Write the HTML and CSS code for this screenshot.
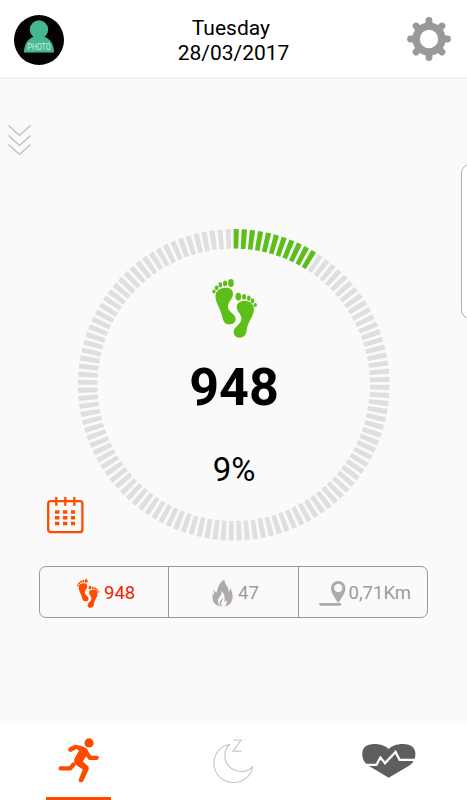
FILE: index.html
```html
<!DOCTYPE html>
<html lang="en">
<head>
    <meta charset="UTF-8">
    <meta name="viewport" content="width=device-width, initial-scale=1.0">
    <title>Activity</title>
    <link rel="stylesheet" href="styles.css">
</head>
<body>
    <svg class="symbols" aria-hidden="true">
        <symbol id="feet" viewBox="35 177 133 175">
            <ellipse cx="91" cy="189" rx="8.5" ry="12"/>
            <ellipse cx="73.500" cy="190" rx="6" ry="8.500"/>
            <ellipse cx="59.500" cy="194" rx="5.500" ry="8"/>
            <ellipse cx="48.500" cy="203" rx="5.500" ry="7"/>
            <ellipse cx="40.500" cy="214" rx="5" ry="6"/>
            <path d="M45 229C44 210 61 203 77 203C90 203 97 210 97 221C97 237 82 245 82 259C82 275 105 280 105 296C105 307 96 312 86 312C74 312 69 304 66 292C61 265 46 251 45 229Z"/>
            <ellipse cx="113" cy="229" rx="8.500" ry="11.500"/>
            <ellipse cx="130" cy="230" rx="6" ry="8.500"/>
            <ellipse cx="144" cy="234" rx="5.500" ry="8"/>
            <ellipse cx="155" cy="242" rx="5.500" ry="7"/>
            <ellipse cx="163" cy="254" rx="5" ry="6"/>
            <path d="M108 260C108 249 117 242 130 242C147 242 160 249 159 268C158 290 141 301 138 327C136 343 130 351 117 351C106 351 99 344 99 335C99 317 122 313 122 294C122 280 108 275 108 260Z"/>
        </symbol>
    </svg>

    <header class="header">
        <svg class="avatar" viewBox="0 0 50 50">
            <circle cx="25" cy="25" r="25" fill="#050203"/>
            <circle cx="25" cy="14.500" r="9.200" fill="#47b78f"/>
            <path d="M10 37.500C10 29 14 23.500 20 21.500H30C36 23.500 40 29 40 37.500Z" fill="#47b78f"/>
            <text class="avatar-text" x="13.500" y="35.300" textLength="23" lengthAdjust="spacingAndGlyphs">PHOTO</text>
        </svg>
        <div class="date">
            <div>Tuesday&nbsp;</div>
            <div>28/03/2017</div>
        </div>
        <svg class="gear" viewBox="-22 -22 44 44">
            <circle r="12.900" fill="none" stroke="#999" stroke-width="7.400"/>
            <path d="M0-14V-18.500M0 14V18.500M-14 0H-18.500M14 0H18.500M-10-10L-13-13M10-10L13-13M-10 10L-13 13M10 10L13 13" stroke="#999" stroke-width="6.800" stroke-linecap="round"/>
        </svg>
    </header>

    <main class="main">
        <svg class="chevrons" viewBox="0 0 24 31">
            <path d="M.5.5L11.500 10.500L22.500.5M.5 10.500L11.500 20.500L22.500 10.500M.5 19.500L11.500 29.500L22.500 19.500"/>
        </svg>
        <div class="drawer"></div>

        <section class="dial">
            <svg class="ring" viewBox="0 0 312 312">
                <g transform="rotate(-90 155.700 155.800)">
                    <circle class="ring-track" cx="155.700" cy="155.800" r="146" pathLength="360"/>
                    <circle class="ring-value" cx="155.700" cy="155.800" r="146" pathLength="360"/>
                </g>
            </svg>
            <div class="dial-content">
                <svg class="dial-icon"><use href="#feet"/></svg>
                <div class="steps">948</div>
                <div class="percent">9%</div>
            </div>
        </section>

        <svg class="calendar" viewBox="0 0 37 37">
            <rect x="1.200" y="4.200" width="34.200" height="31" rx="2.500"/>
            <path d="M9.300 0V8.700M18.300 0V8.700M27.300 0V8.700"/>
            <path class="calendar-days" d="M8 15H28M8 20.800H28M8 26.500H28"/>
        </svg>

        <div class="stats">
            <div class="stat active">
                <svg class="stat-feet"><use href="#feet"/></svg>
                <span>948</span>
            </div>
            <div class="stat">
                <svg class="stat-flame" viewBox="0 0 64 84">
                    <path d="M38 0C36 14 52 23 51 38C55 36 56 31 55 27C66 43 66 67 52 77C46 82 42 82 38 83C45 77 47 70 43 63C41 67 40 68 37 69C41 56 37 43 29 36C31 49 19 54 18 66C17 74 22 80 28 83C12 80 1 71 2 57C2 51 0 49 0 46L5 49C7 44 4 39 5 33C9 36 10 39 12 42C20 34 14 17 38 0Z"/>
                    <path d="M33 56C35 66 27 67 28 74C28 79 31 82 34 83C27 83 22 78 23 72C24 65 31 64 33 56Z"/>
                </svg>
                <span>47</span>
            </div>
            <div class="stat">
                <svg class="stat-pin" viewBox="0 0 81 76">
                    <path fill-rule="evenodd" d="M58 0C70 0 80 10 80 22C80 37 66 54 58 67C50 54 36 37 36 22C36 10 46 0 58 0ZM58 9A12.500 12.500 0 1 0 58 34A12.500 12.500 0 1 0 58 9Z"/>
                    <path d="M4 71H63" stroke="#afa9a9" stroke-width="8" stroke-linecap="round"/>
                </svg>
                <span>0,71Km</span>
            </div>
        </div>
    </main>

    <nav class="tabs">
        <a class="tab active">
            <svg class="runner" viewBox="82 70 124 136">
                <circle cx="176" cy="85" r="14"/>
                <path d="M133 90C145 91 157 94 166 100C175 106 175 114 169 122L157 141L170 152C176 157 176 162 173 169L159 199C155 208 142 204 145 195L157 165L138 152C129 145 129 136 134 128L146 108L137 103L124 111C115 115 108 105 117 99Z"/>
                <path d="M168 115L179 130H199M129 150L119 162H90" fill="none" stroke="#ff4b00" stroke-width="13" stroke-linecap="round" stroke-linejoin="round"/>
            </svg>
        </a>
        <a class="tab">
            <svg class="moon" viewBox="0 0 42 46">
                <path d="M16.500 5.500C7 7 1 15 1 24.500C1 35 9.500 43.500 20 43.500C30 43.500 38.500 37 39.500 28C35 32 30 33.500 24.500 32C15 30 10 21 12.500 12C13.200 9.300 14.500 7.500 16.500 5.500Z"/>
                <path d="M20 1H28L20 12.200H28.500"/>
            </svg>
        </a>
        <a class="tab">
            <svg class="heart" viewBox="36 40 162 106">
                <path d="M116 145L54 108C40 98 36 86 36 73C36 54 49 43 72 43C94 43 107 50 116 58C125 50 138 43 160 43C183 43 197 54 197 73C197 86 193 98 179 108Z" fill="#5e5e5e"/>
                <path d="M34 106H79L91 84L105 101L137 67L149 91H200" fill="none" stroke="#fff" stroke-width="7"/>
            </svg>
        </a>
    </nav>
</body>
</html>
```

FILE: styles.css
```css
* {
    margin: 0;
    padding: 0;
    box-sizing: border-box;
}

body {
    display: flex;
    flex-direction: column;
    width: 467px;
    height: 800px;
    overflow: hidden;
    background: #fafafa;
    color: #000;
    font-family: Roboto, sans-serif;
}

svg {
    display: block;
}

.symbols {
    position: absolute;
    width: 0;
    height: 0;
}

/* Header */
.header {
    display: flex;
    justify-content: space-between;
    align-items: flex-start;
    height: 79px;
    padding: 15px 16px 0 14px;
    background: #fff;
    border-bottom: 2px solid #f0f0f0;
}

.avatar {
    width: 50px;
    height: 50px;
}

.avatar-text {
    font-size: 9px;
    fill: #d5f2e8;
}

.date {
    margin-left: -4px;
    padding-top: 1px;
    text-align: center;
    font-size: 21px;
    line-height: 25px;
}

.gear {
    width: 44px;
    height: 44px;
    margin-top: 2px;
}

/* Main */
.main {
    position: relative;
    flex: 1;
    padding-top: 46px;
}

.chevrons {
    width: 24px;
    height: 31px;
    margin-left: 8px;
    fill: none;
    stroke: #bbb;
    stroke-width: 1.2;
}

.drawer {
    position: absolute;
    top: 85px;
    left: 461px;
    width: 20px;
    height: 155px;
    background: #fff;
    border: 1px solid #b0b0b0;
    border-radius: 9px;
}

.dial {
    display: grid;
    width: 312px;
    height: 312px;
    margin: 73px 0 0 78px;
}

.ring,
.dial-content {
    grid-area: 1 / 1;
}

.ring {
    width: 312px;
    height: 312px;
}

.ring circle {
    fill: none;
    stroke-width: 19.5;
}

.ring .ring-track {
    stroke: #dfdfdd;
    stroke-dasharray: 1.9 1.1;
}

/* 11 segments of 120 */
.ring .ring-value {
    stroke: #5bbf17;
    stroke-dasharray: 1.9 1.1 1.9 1.1 1.9 1.1 1.9 1.1 1.9 1.1 1.9 1.1 1.9 1.1 1.9 1.1 1.9 1.1 1.9 1.1 1.9 328.1;
}

.dial-content {
    display: flex;
    flex-direction: column;
    align-items: center;
    padding-top: 50px;
}

.dial-icon {
    width: 45px;
    height: 59px;
    fill: #5bbf17;
}

.steps {
    margin-top: 19px;
    font-size: 52px;
    font-weight: 700;
    line-height: 62px;
}

.percent {
    margin-top: 31px;
    font-size: 33px;
    line-height: 40px;
}

.calendar {
    width: 37px;
    height: 37px;
    margin: -44px 0 0 47px;
    fill: none;
    stroke: #ff4b00;
    stroke-width: 2.3;
}

.calendar .calendar-days {
    stroke-width: 3.4;
    stroke-dasharray: 4.4 3.6;
}

.stats {
    display: flex;
    width: 389px;
    height: 52px;
    margin: 32px 0 0 39px;
    border: 1px solid #96989d;
    border-radius: 7px;
}

.stat {
    display: flex;
    flex: 1;
    justify-content: center;
    align-items: center;
    padding: 2px 0 0 4px;
    color: #9a9ba0;
    fill: #afa9a9;
    font-size: 18.5px;
}

.stat + .stat {
    border-left: 1px solid #96989d;
}

.stat.active {
    color: #f51e00;
    fill: #ff4b00;
}

.stat-feet {
    width: 22px;
    height: 29px;
    margin-right: 5px;
}

.stat-flame {
    width: 21px;
    height: 28px;
    margin-right: 5px;
}

.stat-pin {
    width: 27px;
    height: 25px;
    margin-right: 3px;
}

/* Bottom tabs */
.tabs {
    display: flex;
    height: 79px;
    background: #fff;
}

.tab {
    display: flex;
    flex: none;
    width: 33.333%;
    justify-content: center;
    align-items: flex-start;
}

.tab.active {
    padding-left: 13px;
}

.tab.active::after {
    content: "";
    align-self: flex-end;
    width: 65px;
    height: 3px;
    margin: 0 0 0 -53px;
    background: #ff4b00;
}

.runner {
    width: 41px;
    height: 45px;
    margin-top: 17px;
    fill: #ff4b00;
}

.moon {
    width: 42px;
    height: 46px;
    margin: 18px 0 0 2px;
    fill: none;
    stroke: #c8c8c8;
    stroke-width: 1.2;
}

.heart {
    width: 54px;
    height: 35px;
    margin-top: 22px;
}
```
